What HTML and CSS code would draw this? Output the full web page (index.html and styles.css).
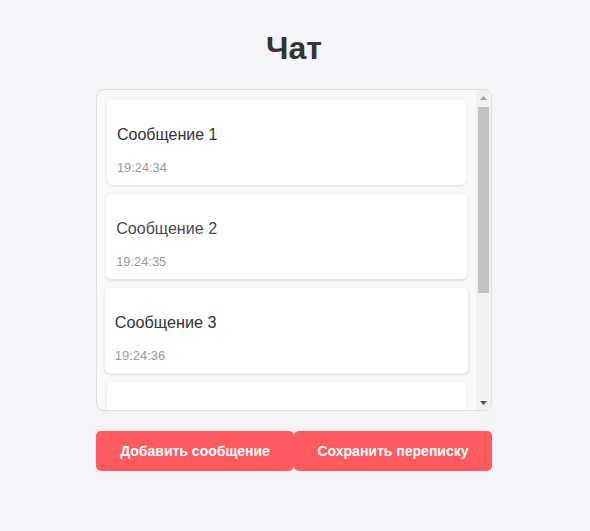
FILE: index.html
```html
<!DOCTYPE html>
<html lang="ru">
<head>
<meta charset="utf-8">
<title>Чат</title>
<link rel="stylesheet" href="styles.css">
</head>
<body>
<main class="app">
  <h1 class="title">Чат</h1>
  <div class="chat">
    <div class="chat-list">
      <div class="msg">
        <p class="msg-text">Сообщение 1</p>
        <div class="msg-time">19:24:34</div>
      </div>
      <div class="msg msg-grow1">
        <p class="msg-text msg-fading">Сообщение 2</p>
        <div class="msg-time">19:24:35</div>
      </div>
      <div class="msg msg-grow2">
        <p class="msg-text">Сообщение 3</p>
        <div class="msg-time">19:24:36</div>
      </div>
      <div class="msg msg-entering">
        <p class="msg-text">Сообщение 4</p>
        <div class="msg-time">19:24:37</div>
      </div>
    </div>
    <div class="scrollbar" aria-hidden="true">
      <div class="sb-btn">
        <svg width="7" height="4" viewBox="0 0 7 4"><path d="M0 4 L3.5 0 L7 4 Z" fill="#a3a3a3"/></svg>
      </div>
      <div class="sb-track">
        <div class="sb-thumb"></div>
      </div>
      <div class="sb-btn">
        <svg width="7" height="4" viewBox="0 0 7 4"><path d="M0 0 L7 0 L3.5 4 Z" fill="#505050"/></svg>
      </div>
    </div>
  </div>
  <div class="actions">
    <button class="btn" type="button">Добавить сообщение</button>
    <button class="btn" type="button">Сохранить переписку</button>
  </div>
</main>
</body>
</html>
```

FILE: styles.css
```css
html, body {
  background: #f4f3f8;
}
body {
  margin: 8px;
  font-family: "Liberation Sans", Arial, sans-serif;
  color: #333;
}
.app {
  width: 396px;
  margin: 0 auto;
  transform: translateX(-1px);
}
.title {
  font-size: 32px;
  font-weight: bold;
  text-align: center;
  margin: 22px 0 22px;
  color: #333;
}
.chat {
  box-sizing: border-box;
  height: 322px;
  border: 1px solid #ddd;
  border-radius: 8px;
  background: #f8f8f8;
  display: flex;
  overflow: hidden;
}
.chat-list {
  flex: 1;
  min-width: 0;
  padding: 10px;
  overflow: hidden;
}
.scrollbar {
  width: 15px;
  flex: none;
  background: #f1f1f1;
  display: flex;
  flex-direction: column;
}
.sb-btn {
  height: 15px;
  flex: none;
  display: flex;
  align-items: center;
  justify-content: center;
}
.sb-btn svg {
  display: block;
}
.sb-track {
  flex: 1;
  padding: 2px 2px 0;
}
.sb-thumb {
  height: 186px;
  background: #c1c1c1;
}
.msg {
  background: #fff;
  border-radius: 5px;
  box-shadow: 0 1px 2px rgba(0, 0, 0, 0.1);
  padding: 26px 10px 10px;
  margin-bottom: 10px;
}
.msg-grow1 {
  transform: translateY(-1px) scale(1.005);
}
.msg-grow2 {
  transform: translateY(-2px) scale(1.013);
  margin-bottom: 7px;
}
.msg-entering {
  padding-top: 30px;
}
.msg-text {
  margin: 0 0 17px;
  font-size: 16px;
  line-height: 18px;
  color: #333;
}
.msg-fading {
  color: #4a4a4a;
}
.msg-time {
  font-size: 12.8px;
  line-height: 14px;
  color: #999;
}
.actions {
  display: flex;
  margin-top: 20px;
}
.btn {
  flex: 1;
  height: 40px;
  border: none;
  border-radius: 5px;
  background: #ff5a5f;
  color: #fff;
  font-family: "Liberation Sans", Arial, sans-serif;
  font-size: 14px;
  font-weight: bold;
  margin: 0;
  padding: 0;
}
```
